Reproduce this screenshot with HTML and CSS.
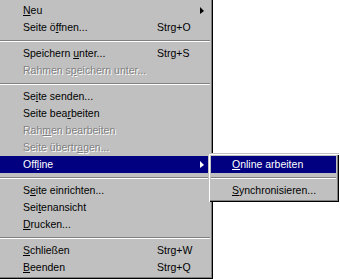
FILE: index.html
```html
<!DOCTYPE html>
<html lang="de">
<head>
  <meta charset="UTF-8">
  <title>Datei</title>
  <link rel="stylesheet" href="styles.css">
</head>
<body>
  <div class="screen">
    <div class="menu main-menu">
      <div class="item has-sub"><span class="label"><u>N</u>eu</span><span class="key"></span><span class="arrow"></span></div>
      <div class="item"><span class="label">Seite ö<u>f</u>fnen...</span><span class="key">Strg+O</span></div>
      <div class="sep"></div>
      <div class="item"><span class="label">Speichern <u>u</u>nter...</span><span class="key">Strg+S</span></div>
      <div class="item disabled"><span class="label">Rahmen s<u>p</u>eichern unter...</span></div>
      <div class="sep"></div>
      <div class="item"><span class="label">Se<u>i</u>te senden...</span></div>
      <div class="item"><span class="label">Seite bea<u>r</u>beiten</span></div>
      <div class="item disabled"><span class="label">Rah<u>m</u>en bearbeiten</span></div>
      <div class="item disabled"><span class="label">Seite übertr<u>a</u>gen...</span></div>
      <div class="item has-sub active"><span class="label">Off<u>l</u>ine</span><span class="key"></span><span class="arrow"></span></div>
      <div class="sep"></div>
      <div class="item"><span class="label">S<u>e</u>ite einrichten...</span></div>
      <div class="item"><span class="label">Sei<u>t</u>enansicht</span></div>
      <div class="item"><span class="label"><u>D</u>rucken...</span></div>
      <div class="sep"></div>
      <div class="item"><span class="label"><u>S</u>chließen</span><span class="key">Strg+W</span></div>
      <div class="item"><span class="label"><u>B</u>eenden</span><span class="key">Strg+Q</span></div>
    </div>

    <!-- Untermenü "Offline" -->
    <div class="menu sub-menu">
      <div class="item active"><span class="label"><u>O</u>nline arbeiten</span></div>
      <div class="sep"></div>
      <div class="item"><span class="label"><u>S</u>ynchronisieren...</span></div>
    </div>
  </div>
</body>
</html>
```

FILE: styles.css
```css
body {
  margin: 0;
  background: #fff;
  font-family: 'Liberation Sans', Arial, sans-serif;
  font-size: 10.5px;
  color: #000;
}

.screen {
  position: relative;
  width: 340px;
  height: 279px;
  overflow: hidden;
}

.menu {
  background: #c0c0c0;
  box-sizing: border-box;
}

/* links und oben abgeschnitten */
.main-menu {
  width: 213px;
  height: 279px;
  padding: 2px 3px 3px 0;
  box-shadow: inset -1px -1px 0 #000, inset -2px -2px 0 #808080;
}

.sub-menu {
  position: absolute;
  left: 208px;
  top: 153px;
  width: 131px;
  padding: 3px;
  box-shadow: inset 1px 1px 0 #c0c0c0, inset 2px 2px 0 #fff,
              inset -1px -1px 0 #000, inset -2px -2px 0 #808080;
}

.item {
  display: grid;
  grid-template-columns: 157px 43px 10px;
  height: 17px;
  line-height: 17px;
  white-space: nowrap;
}

.sub-menu .item {
  grid-template-columns: 1fr;
}

.label {
  padding-left: 23px;
}
.sub-menu .label {
  padding-left: 21px;
}

.key {
  display: block;
}

.arrow {
  display: block;
  width: 0;
  height: 0;
  margin-top: 5px;
  border-left: 4px solid #000;
  border-top: 4px solid transparent;
  border-bottom: 3px solid transparent;
}

.item.active {
  background: #000080;
  color: #fff;
}
.item.active .arrow {
  border-left-color: #fff;
}

.item.disabled {
  color: #808080;
  text-shadow: 1px 1px 0 #fff;
}

u {
  text-decoration: underline;
  text-underline-offset: 1px;
}

.sep {
  height: 1px;
  margin: 4px 0 3px 0;
  border-top: 1px solid #808080;
  background: #fff;
  box-sizing: content-box;
}
```
